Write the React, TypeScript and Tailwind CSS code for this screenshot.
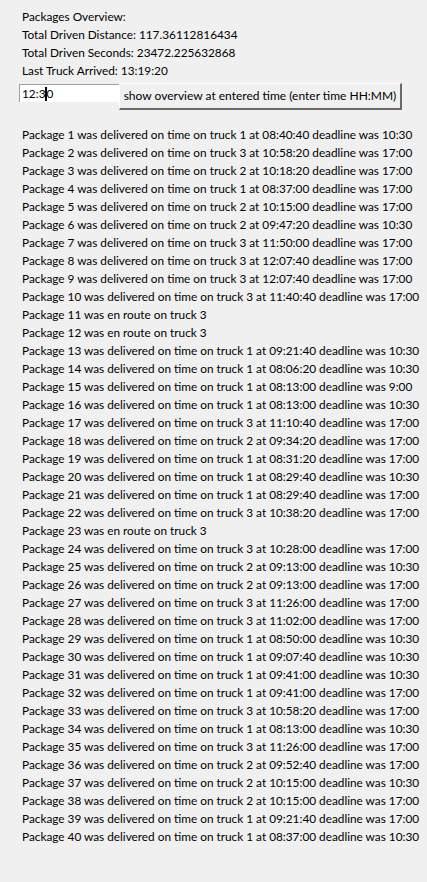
const packages: string[] = [
  'Package 1 was delivered on time on truck 1 at 08:40:40 deadline was 10:30',
  'Package 2 was delivered on time on truck 3 at 10:58:20 deadline was 17:00',
  'Package 3 was delivered on time on truck 2 at 10:18:20 deadline was 17:00',
  'Package 4 was delivered on time on truck 1 at 08:37:00 deadline was 17:00',
  'Package 5 was delivered on time on truck 2 at 10:15:00 deadline was 17:00',
  'Package 6 was delivered on time on truck 2 at 09:47:20 deadline was 10:30',
  'Package 7 was delivered on time on truck 3 at 11:50:00 deadline was 17:00',
  'Package 8 was delivered on time on truck 3 at 12:07:40 deadline was 17:00',
  'Package 9 was delivered on time on truck 3 at 12:07:40 deadline was 17:00',
  'Package 10 was delivered on time on truck 3 at 11:40:40 deadline was 17:00',
  'Package 11 was en route on truck 3',
  'Package 12 was en route on truck 3',
  'Package 13 was delivered on time on truck 1 at 09:21:40 deadline was 10:30',
  'Package 14 was delivered on time on truck 1 at 08:06:20 deadline was 10:30',
  'Package 15 was delivered on time on truck 1 at 08:13:00 deadline was 9:00',
  'Package 16 was delivered on time on truck 1 at 08:13:00 deadline was 10:30',
  'Package 17 was delivered on time on truck 3 at 11:10:40 deadline was 17:00',
  'Package 18 was delivered on time on truck 2 at 09:34:20 deadline was 17:00',
  'Package 19 was delivered on time on truck 1 at 08:31:20 deadline was 17:00',
  'Package 20 was delivered on time on truck 1 at 08:29:40 deadline was 10:30',
  'Package 21 was delivered on time on truck 1 at 08:29:40 deadline was 17:00',
  'Package 22 was delivered on time on truck 3 at 10:38:20 deadline was 17:00',
  'Package 23 was en route on truck 3',
  'Package 24 was delivered on time on truck 3 at 10:28:00 deadline was 17:00',
  'Package 25 was delivered on time on truck 2 at 09:13:00 deadline was 10:30',
  'Package 26 was delivered on time on truck 2 at 09:13:00 deadline was 17:00',
  'Package 27 was delivered on time on truck 3 at 11:26:00 deadline was 17:00',
  'Package 28 was delivered on time on truck 3 at 11:02:00 deadline was 17:00',
  'Package 29 was delivered on time on truck 1 at 08:50:00 deadline was 10:30',
  'Package 30 was delivered on time on truck 1 at 09:07:40 deadline was 10:30',
  'Package 31 was delivered on time on truck 1 at 09:41:00 deadline was 10:30',
  'Package 32 was delivered on time on truck 1 at 09:41:00 deadline was 17:00',
  'Package 33 was delivered on time on truck 3 at 10:58:20 deadline was 17:00',
  'Package 34 was delivered on time on truck 1 at 08:13:00 deadline was 10:30',
  'Package 35 was delivered on time on truck 3 at 11:26:00 deadline was 17:00',
  'Package 36 was delivered on time on truck 2 at 09:52:40 deadline was 17:00',
  'Package 37 was delivered on time on truck 2 at 10:15:00 deadline was 10:30',
  'Package 38 was delivered on time on truck 2 at 10:15:00 deadline was 17:00',
  'Package 39 was delivered on time on truck 1 at 09:21:40 deadline was 17:00',
  'Package 40 was delivered on time on truck 1 at 08:37:00 deadline was 10:30',
]

export default function App() {
  return (
    <div className="min-h-[882px] w-[427px] bg-[#f0f0f0] text-[11.8px] leading-[18px] text-black font-['Lato',sans-serif]">
      <div className="pt-[8px] pl-[22px]">
        <div>Packages Overview:</div>
        <div>Total Driven Distance: 117.36112816434</div>
        <div>Total Driven Seconds: 23472.225632868</div>
        <div>Last Truck Arrived: 13:19:20</div>
      </div>

      <div className="flex items-start pl-[19px] mt-[3px]">
        <div className="mt-[1px] w-[100px] h-[18px] bg-white border-t border-l border-[#a0a0a0] flex items-center pl-[2px]">
          <span>12:3</span>
          <span className="inline-block w-[2px] h-[14px] bg-black -mr-[1px]" />
          <span>0</span>
        </div>
        <button className="w-[283px] h-[27px] bg-[#f0f0f0] border-t border-l border-white border-r-2 border-b-2 border-r-[#696969] border-b-[#696969] text-[12px] text-center whitespace-nowrap">
          show overview at entered time (enter time HH:MM)
        </button>
      </div>

      <div className="pl-[22px] mt-[16px]">
        {packages.map((p) => (
          <div key={p} className="whitespace-nowrap">{p}</div>
        ))}
      </div>
    </div>
  )
}
